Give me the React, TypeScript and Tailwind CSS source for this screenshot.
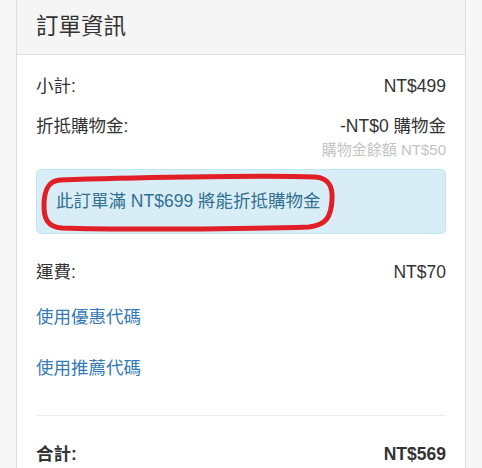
const FONT = "font-['Liberation_Sans','Noto_Sans_CJK_TC',sans-serif]";

function Row({ label, value, className = "" }: { label: string; value: string; className?: string }) {
  return (
    <div className={`flex justify-between leading-[25px] ${className}`}>
      <span>{label}</span>
      <span>{value}</span>
    </div>
  );
}

export default function App() {
  return (
    <div className={`min-h-[468px] bg-[#f7f7f7] px-4 text-[17.5px] text-[#333] ${FONT}`}>
      <div className="border-x border-[#ddd] bg-white">
        {/* Header */}
        <div className="h-[55px] border-b border-[#ddd] bg-[#f5f5f5] px-[19px] pt-[14px]">
          <h3 className="text-[22.5px] leading-[26px] text-[#333]">訂單資訊</h3>
        </div>

        {/* Body */}
        <div className="px-[19px] pt-[19px] pb-4">
          <Row label="小計:" value="NT$499" />
          <Row label="折抵購物金:" value="-NT$0 購物金" className="mt-[15px]" />
          <div className="text-right text-[15px] leading-[21px] text-[#c4c4c4]">購物金餘額 NT$50</div>

          <div className="relative mt-[9px] rounded-[5px] border border-[#bce8f1] bg-[#d9edf7] px-[19px] py-[19px] leading-[25px] text-[#31708f]">
            此訂單滿 NT$699 將能折抵購物金
            <svg className="pointer-events-none absolute left-0 top-0 overflow-visible" width="300" height="62">
              <path
                d="M 23 10 C 80 8, 220 5, 278 7 C 292 8, 296 17, 295 30 C 294 46, 290 55, 272 57 C 210 59, 80 60, 25 58 C 10 57, 7 48, 7 36 C 7 22, 10 11, 23 10 Z"
                fill="none"
                stroke="#e11f26"
                strokeWidth="5"
                strokeLinejoin="round"
              />
            </svg>
          </div>

          <Row label="運費:" value="NT$70" className="mt-[26px]" />
          <div className="mt-[20px] leading-[25px] text-[#337ab7]">使用優惠代碼</div>
          <div className="mt-[26px] leading-[25px] text-[#337ab7]">使用推薦代碼</div>

          <hr className="mt-[34px] border-t border-[#eee]" />

          <Row label="合計:" value="NT$569" className="mt-[26px] font-bold" />
        </div>
      </div>
    </div>
  );
}
